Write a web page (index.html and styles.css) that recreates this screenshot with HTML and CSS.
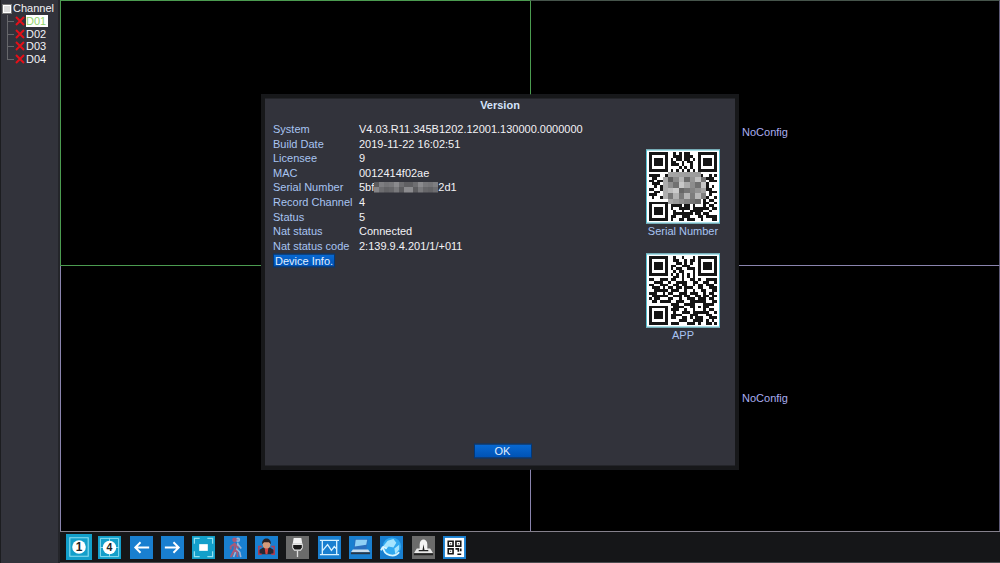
FILE: index.html
```html
<!DOCTYPE html>
<html lang="en">
<head>
<meta charset="utf-8">
<title>Version</title>
<link rel="stylesheet" href="styles.css">
</head>
<body>
<div class="app">
  <nav class="channels">
    <div class="root"><span class="toggle"></span>Channel</div>
    <ul class="tree">
      <li><svg class="cross" viewBox="0 0 10 10"><path d="M1 1l8 8M9 1L1 9"/></svg><span class="selected">D01</span></li>
      <li><svg class="cross" viewBox="0 0 10 10"><path d="M1 1l8 8M9 1L1 9"/></svg><span>D02</span></li>
      <li><svg class="cross" viewBox="0 0 10 10"><path d="M1 1l8 8M9 1L1 9"/></svg><span>D03</span></li>
      <li><svg class="cross" viewBox="0 0 10 10"><path d="M1 1l8 8M9 1L1 9"/></svg><span>D04</span></li>
    </ul>
  </nav>
  <main class="main">
    <div class="views">
      <div class="view active"></div>
      <div class="view beside">NoConfig</div>
      <div class="view"></div>
      <div class="view">NoConfig</div>
    </div>
    <div class="toolbar">
      <button class="tool cyan current" aria-label="Single view"><svg viewBox="0 0 24 24"><path d="M3.500 3.500h17v17h-17z" fill="none" stroke="#8fe0f2"/><circle cx="12" cy="12" r="6.300" fill="#fff"/><text x="12" y="15.500" class="num">1</text></svg></button>
      <button class="tool cyan" aria-label="Four views"><svg viewBox="0 0 24 24"><path d="M2.500 2.500h19v19h-19zM12 2v20M2 12h20" fill="none" stroke="#8fe0f2"/><circle cx="12" cy="12" r="7" fill="#fff"/><text x="12" y="16" class="num">4</text></svg></button>
      <button class="tool" aria-label="Previous"><svg viewBox="0 0 24 24"><path d="M20 12H6M11 6.500L5.500 12l5.500 5.500" fill="none" stroke="#fff" stroke-width="2"/></svg></button>
      <button class="tool" aria-label="Next"><svg viewBox="0 0 24 24"><path d="M4 12h14M13 6.500l5.500 5.500-5.500 5.500" fill="none" stroke="#fff" stroke-width="2"/></svg></button>
      <button class="tool cyan" aria-label="Full screen"><svg viewBox="0 0 24 24"><path d="M2.500 8V2.500H8M16 2.500h5.500V8M21.500 16v5.500H16M8 21.500H2.500V16" fill="none" stroke="#8fe0f2" stroke-width="1.300"/><path d="M7.500 8.500h9v7h-9z" fill="#fff"/></svg></button>
      <button class="tool" aria-label="Motion detection"><svg viewBox="0 0 24 24"><g fill="none" stroke="#9cb5d8" stroke-width="1.700"><circle cx="14.500" cy="4" r="1.500"/><path d="M14.500 7l-1 7 3 3 1 5M13 14l-3 8M14 8l4 5"/></g><g fill="none" stroke="#a65a7a" stroke-width="2"><circle cx="11" cy="4" r="1.500" fill="#a65a7a"/><path d="M11 7v7l3 3v5M11 14l-2 4-2 4M11 8l-4 3v3M11 8l4 5"/></g></svg></button>
      <button class="tool" aria-label="Face detection"><svg viewBox="0 0 24 24"><path d="M3.500 19v-4l5-3h7l5 3v4z" fill="#272833"/><path d="M10 12h4l-1 7h-2z" fill="#d7433f"/><ellipse cx="12" cy="8.500" rx="4" ry="4.500" fill="#d59a79"/><path d="M7.500 8.500c-1-8 10-8 9 0l-2-2h-5z" fill="#2b2020"/><path d="M7 11H4v8h3M17 11h3v8h-3" fill="none" stroke="#b63e52" stroke-width="1.500"/></svg></button>
      <button class="tool gray" aria-label="Camera"><svg viewBox="0 0 24 24"><path d="M8 2h8l1 6H7z" fill="#f2f2f2"/><path d="M6.500 8h11v4.500l-2 3h-7l-2-3z" fill="#e4e4e4"/><path d="M7.500 9.500h9V12l-1.500 2H9l-1.500-2z" fill="#181818"/><path d="M11.300 15.500h1.400V22h-1.400z" fill="#ddd"/></svg></button>
      <button class="tool" aria-label="Picture settings"><svg viewBox="0 0 24 24"><path d="M2 4.500h20M2 19.500h20M4.500 4v16M19.500 4v16M5 15l5-6 4 6 3-4 3 3" fill="none" stroke="#d6f1ff" stroke-width="1.400"/></svg></button>
      <button class="tool" aria-label="Computer"><svg viewBox="0 0 24 24"><path d="M6 3h14l-2 11H5z" fill="#2b6fbe"/><path d="M7 4h12l-1 5L6 11z" fill="#8fd0f5"/><path d="M4 14h16l2 3H2z" fill="#c9dcec"/><path d="M2 17h20v2H2z" fill="#293747"/></svg></button>
      <button class="tool" aria-label="Network"><svg viewBox="0 0 24 24"><circle cx="12.500" cy="11" r="9.500" fill="#31a9f0"/><path d="M8 5l6-2 3 4-3 5-5-1-3 3-2-4zM15 13l5-4v5l-4 5z" fill="#a5e5ff"/><path d="M3 11c1 10 12 12 17 6M3 11l-2 4M3 11l4 2" fill="none" stroke="#d8f6ff" stroke-width="1.800"/></svg></button>
      <button class="tool gray" aria-label="PTZ control"><svg viewBox="0 0 24 24"><path d="M5 13h14l3 5H2z" fill="#e7e7e7"/><path d="M8 15V9c0-7 8-7 8 0v6z" fill="#f4f4f4"/><path d="M2 18h20v2H2zM7 14.500h4l1-6 1 6h4v1.500H7z" fill="#222"/></svg></button>
      <button class="tool" aria-label="Version"><svg viewBox="0 0 24 24"><path d="M2 2h20v20H2z" fill="#fff"/><g fill="none" stroke="#151515" stroke-width="1.700"><path d="M5.500 5.500h5v5h-5zM13.500 5.500h5v5h-5zM5.500 13.500h5v5h-5zM13 13.500h3v3M15 19h4M18.500 13v3"/></g><path d="M7.500 7.500h1v1h-1zM15.500 7.500h1v1h-1zM7.500 15.500h1v1h-1z"/></svg></button>
    </div>
  </main>
</div>
<section class="dialog" role="dialog" aria-labelledby="title">
  <h1 id="title">Version</h1>
  <div class="body">
    <div class="details">
      <dl class="facts">
        <dt>System</dt><dd>V4.03.R11.345B1202.12001.130000.0000000</dd>
        <dt>Build Date</dt><dd>2019-11-22 16:02:51</dd>
        <dt>Licensee</dt><dd>9</dd>
        <dt>MAC</dt><dd>0012414f02ae</dd>
        <dt>Serial Number</dt><dd class="serial">5bf<svg class="mask" viewBox="0 0 13 2" preserveAspectRatio="none" data-mosaic="strip"></svg>2d1</dd>
        <dt>Record Channel</dt><dd>4</dd>
        <dt>Status</dt><dd>5</dd>
        <dt>Nat status</dt><dd>Connected</dd>
        <dt>Nat status code</dt><dd>2:139.9.4.201/1/+011</dd>
      </dl>
      <button class="blue info">Device Info.</button>
    </div>
    <div class="codes">
      <figure><svg class="qr" viewBox="-0.700 -0.700 26.400 26.400" data-code="serial"></svg><figcaption>Serial Number</figcaption></figure>
      <figure><svg class="qr" viewBox="-0.700 -0.700 26.400 26.400" data-code="app"></svg><figcaption>APP</figcaption></figure>
    </div>
  </div>
  <button class="blue ok">OK</button>
</section>
<script src="codes.js"></script>
</body>
</html>
```
FILE: styles.css
```css
* { box-sizing: border-box; }
body {
  margin: 0;
  background: #000;
  color: #f2f2f6;
  font: 11px/13px "Liberation Sans", Arial, sans-serif;
}
button { font: inherit; color: inherit; border: 0; padding: 0; }
.app { display: flex; height: 100vh; }
.channels {
  flex: 0 0 60px;
  background: #32333b;
  border-right: 2px solid #24252a;
  border-left: 1px solid #1c1d20;
  padding-top: 2px;
}
.root { display: flex; align-items: center; gap: 2px; padding-left: 2px; }
.toggle { width: 8px; height: 8px; background: #ddd; border: 1px solid #fff; outline: 1px solid #777; }
.tree { display: grid; grid-auto-rows: 1fr; height: 50px; list-style: none; margin: 0 0 0 6px; padding: 0; line-height: 12px; }
.tree li { position: relative; display: flex; align-items: center; padding-left: 7px; border-left: 1px solid #66676b; }
.tree li:last-child { border-left-color: transparent; }
.tree li::before { content: ""; position: absolute; left: 0; top: 6px; width: 6px; border-top: 1px solid #66676b; }
.tree li:last-child::after { content: ""; position: absolute; left: -1px; top: 0; height: 7px; border-left: 1px solid #66676b; }
.cross { width: 10px; height: 10px; margin-right: 1px; stroke: #e31019; stroke-width: 2; }
.selected { background: #fff; color: #91d46d; padding-right: 2px; }
.main { flex: 1; display: flex; flex-direction: column; min-width: 0; }
.views { flex: 1; display: grid; grid-template: 1fr 1fr / 1fr 1fr; border-bottom: 1px solid #85818c; }
.view {
  display: flex;
  align-items: center;
  justify-content: center;
  color: #a9aef0;
  border-left: 1px solid #8a84ae;
  border-bottom: 1px solid #8a84ae;
}
.view:nth-child(n+3) { border-bottom: 0; }
.view:nth-child(even) { border-right: 1px solid #5f5b78; }
.view.beside { border-top: 1px solid #46544b; border-left-color: #4b9b50; }
.view.active { border: 1px solid #4b9b50; border-right: 0; }
.toolbar {
  height: 31px;
  display: grid;
  grid-template-columns: repeat(13, 1fr);
  width: 100%;
  padding-left: 3px;
  padding-right: calc(100% - 410px);
  align-items: center;
  justify-items: center;
  background: #151618;
  border-bottom: 1px solid #4b4c4f;
}
.tool { width: 23px; height: 23px; background: #197fd0; }
.tool svg { display: block; width: 100%; height: 100%; }
.cyan { background: #139fca; }
.gray { background: #6b6b6b; }
.current { width: 26px; height: 26px; }
.num { font: bold 11px "Liberation Sans", Arial, sans-serif; fill: #222; text-anchor: middle; }
.dialog {
  position: absolute;
  left: 50%;
  top: 50%;
  transform: translate(-50%, -50%);
  width: 478px;
  height: 375px;
  display: flex;
  flex-direction: column;
  background: #32333b;
  border: 4px solid #17181a;
}
.dialog h1 { margin: 0; font: bold 11px/12px "Liberation Sans", Arial, sans-serif; color: #d5e3fa; text-align: center; }
.body { flex: 1; display: flex; justify-content: space-between; padding: 12px 14px 0 8px; }
.facts { display: grid; grid-template-columns: 86px 1fr; grid-auto-rows: 1fr; align-items: center; height: 131px; margin: 0; white-space: nowrap; }
.facts dt { color: #a8c4f2; }
.facts dd { margin: 0; }
.serial { display: flex; align-items: center; }
.mask { width: 64px; height: 11px; }
.blue { background: linear-gradient(#0869d2, #0052b4); color: #e0efff; border: 1px solid #023878; }
.info { display: block; height: 14px; padding: 0 1px; line-height: 12px; }
.codes { display: flex; flex-direction: column; gap: 16px; padding-top: 27px; }
figure { margin: 0; width: 76px; display: flex; flex-direction: column; align-items: center; gap: 1px; }
.qr { width: 74px; height: 74px; background: #fff; border: 1px solid #54bfd0; }
figcaption { color: #a8c4f2; white-space: nowrap; }
.ok { align-self: center; width: 58px; height: 15px; line-height: 12px; margin: 0 0 7px 5px; }
```
FILE: codes.js
```js
const SVG = "http://www.w3.org/2000/svg";

const codes = {
  app: [
    "1111111001001000101111111", "1000001001100101101000001", "1011101000110101001011101",
    "1011101011001110001011101", "1011101010110011101011101", "1000001001011000101000001",
    "1111111010101010101111111", "0000000001101010100000000", "1100111011001001101001111",
    "0011100100111100110011001", "1100111001101100101101110", "0111010110110111001100111",
    "0011111011100100100110011", "1110010110011101110010110", "0111111001110110011011011",
    "1011000110010011101110110", "0110111100111001111110011", "0000000011100111100011110",
    "1111111001111001101011000", "1000001011100100100010110", "1011101001001110111111001",
    "1011101011110001110001100", "1011101011001101011100111", "1000001000011100111101010",
    "1111111011100011101001101"
  ],
  serial: [
    "1111111001010110001111111", "1000001001110111001000001", "1011101010110110101011101",
    "1011101011001011001011101", "1011101011101001001011101", "1000001000010101001000001",
    "1111111010101010101111111", "0000000001011001100000000", "1111001011010110101100101",
    "0110010100101001010001110", "1101101001011010110100111", "0111010110100101101011000",
    "0010101101011010110101010", "1100110010110101010001100", "0011001101001010101010111",
    "1110010010110101000110100", "0100111111010100111111001", "0000000010101110100010110",
    "1111111001001011101011001", "1000001011110110100010110", "1011101010011110111111011",
    "1011101001001001111100100", "1011101001111111011011000", "1000001011001110001101111",
    "1111111010011011100100011"
  ]
};

function rect(svg, x, y, size, fill) {
  const r = document.createElementNS(SVG, "rect");
  r.setAttribute("x", x);
  r.setAttribute("y", y);
  r.setAttribute("width", size);
  r.setAttribute("height", size);
  r.setAttribute("fill", fill);
  r.setAttribute("shape-rendering", "crispEdges");
  svg.append(r);
}

document.querySelectorAll("[data-code]").forEach(svg => {
  codes[svg.dataset.code].forEach((row, y) =>
    [...row].forEach((bit, x) => bit === "1" && rect(svg, x, y, 1, "#151515")));
  if (svg.dataset.code === "serial") {
    for (let y = 7; y < 19; y += 2)
      for (let x = 5; x < 21; x += 2) {
        if ((y === 7 || y === 17) && (x === 5 || x > 17)) continue;
        const g = 90 + (x * 37 + y * 61 + x * y * 11) % 115;
        rect(svg, x, y, 2, `rgb(${g},${g},${g})`);
      }
  }
});

const strip = document.querySelector("[data-mosaic]");
for (let y = 0; y < 2; y++)
  for (let x = 0; x < 13; x++) {
    const g = 90 + (x * 29 + y * 43 + x * x * 7) % 60;
    rect(strip, x, y, 1, `rgb(${g},${g},${g + 3})`);
  }
```
